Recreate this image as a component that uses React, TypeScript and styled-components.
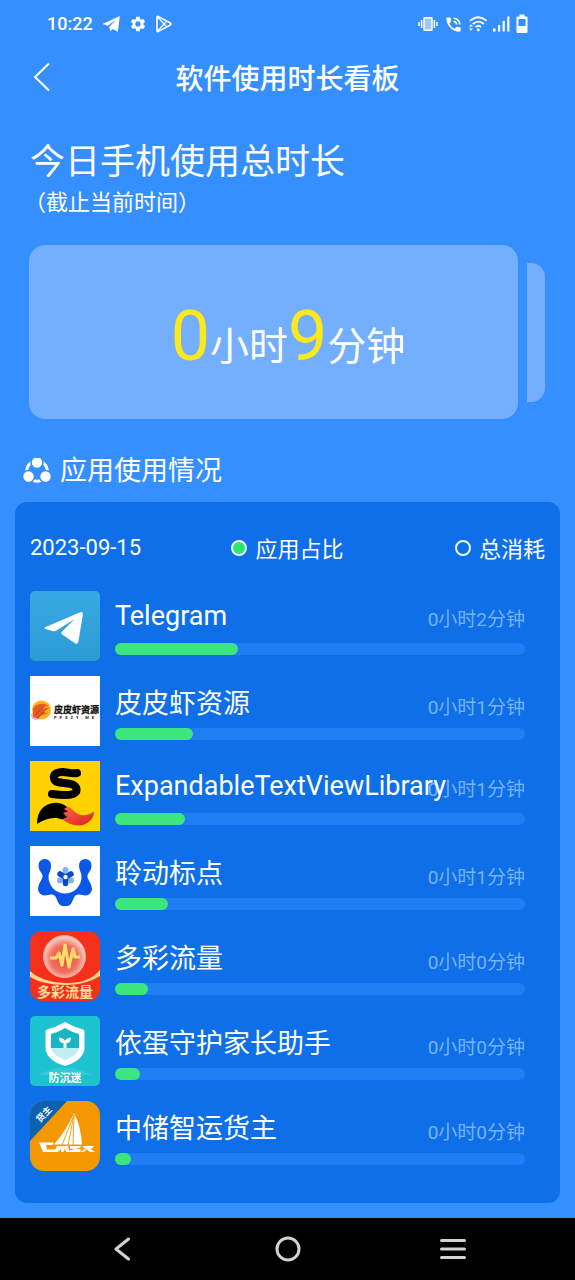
import React, { useState } from 'react';
import styled, { createGlobalStyle } from 'styled-components';
import { MdSettings, MdPhoneInTalk } from 'react-icons/md';

const GlobalStyle = createGlobalStyle`
  * { box-sizing: border-box; }
  body {
    margin: 0;
    background: #368fff;
    color: #fff;
    font-family: Roboto, "Noto Sans CJK SC", sans-serif;
  }
`;

const Screen = styled.div`
  display: flex;
  flex-direction: column;
  min-height: 100vh;
`;

const StatusBar = styled.div`
  display: flex;
  align-items: center;
  justify-content: space-between;
  height: 48px;
  padding: 0 47px;
`;

const StatusGroup = styled.div<{ $gap: number }>`
  display: flex;
  align-items: center;
  gap: ${(p) => p.$gap}px;
  svg { display: block; }
`;

const Clock = styled.span`
  font-size: 18px;
  font-weight: 500;
  line-height: 24px;
`;

const TitleBar = styled.header`
  display: grid;
  grid-template-columns: 60px 1fr 60px;
  align-items: center;
  height: 60px;
  padding: 0 12px;
`;

const IconButton = styled.button`
  display: flex;
  align-items: center;
  justify-content: center;
  height: 56px;
  padding: 0;
  border: 0;
  background: none;
  color: inherit;
  cursor: pointer;
`;

const PageTitle = styled.h1`
  margin: 0;
  padding-top: 4px;
  font-size: 28px;
  font-weight: 500;
  line-height: 56px;
  text-align: center;
`;

const Main = styled.main`
  flex: 1;
  padding: 31px 15px 15px;
`;

const Headline = styled.h2`
  margin: 0;
  padding-left: 15px;
  font-size: 35px;
  font-weight: 400;
  line-height: 48px;
`;

const Subline = styled.p`
  margin: 0;
  padding-left: 9px;
  font-size: 22px;
  line-height: 32px;
`;

const Total = styled.section`
  display: flex;
  align-items: center;
  gap: 9px;
  padding: 0 15px 0 14px;
  margin-top: 26px;
`;

const TotalCard = styled.p`
  flex: 1;
  height: 174px;
  margin: 0;
  padding: 30px 0 0 29px;
  border-radius: 16px;
  background: #73aeff;
  font-size: 39px;
  line-height: 144px;
  text-align: center;
  white-space: nowrap;
`;

const TotalNumber = styled.span`
  color: #fbe91d;
  font-size: 70px;
  line-height: 1;
`;

const NextCard = styled.div`
  width: 18px;
  height: 139px;
  border-radius: 0 14px 14px 0;
  background: #73aeff;
`;

const SectionTitle = styled.h3`
  display: flex;
  align-items: center;
  gap: 9px;
  margin: 32px 0 10px;
  padding-left: 8px;
  font-size: 27px;
  font-weight: 400;
  line-height: 41px;
`;

const Panel = styled.section`
  padding: 26px 15px 32px;
  border-radius: 12px;
  background: #0e6fe8;
`;

const Filters = styled.div`
  display: grid;
  grid-template-columns: 1fr auto 1fr;
  align-items: center;
  height: 40px;
  margin-bottom: 23px;
  font-size: 22px;
  line-height: 40px;
`;

const Choice = styled.label`
  display: flex;
  align-items: center;
  justify-content: flex-end;
  gap: 8px;
  cursor: pointer;
`;

const ChoiceText = styled.span`
  padding-top: 4px;
  line-height: 36px;
`;

const Radio = styled.input`
  appearance: none;
  width: 16px;
  height: 16px;
  margin: 0;
  border: 2px solid #eafaff;
  border-radius: 50%;
  &:checked { background: #2ee56f; }
`;

const AppList = styled.ul`
  display: flex;
  flex-direction: column;
  gap: 15px;
  margin: 0;
  padding: 0;
  list-style: none;
`;

const AppRow = styled.li`
  display: flex;
  gap: 15px;
  height: 70px;
  padding-right: 20px;
`;

const AppIcon = styled.svg<{ $radius: number }>`
  flex: none;
  width: 70px;
  height: 70px;
  border-radius: ${(p) => p.$radius}px;
`;

const Usage = styled.div`
  flex: 1;
  min-width: 0;
`;

const UsageHead = styled.div<{ $latin: boolean }>`
  display: grid;
  height: 52px;
  white-space: nowrap;
  line-height: ${(p) => (p.$latin ? 50 : 56)}px;
  > * { grid-area: 1 / 1; }
`;

const Duration = styled.span`
  justify-self: end;
  padding-top: 4px;
  color: #76b3f7;
  font-size: 19px;
`;

const AppName = styled.span`
  font-size: 27px;
  z-index: 1;
`;

const Track = styled.div`
  height: 12px;
  border-radius: 6px;
  background: #207ef4;
`;

const Fill = styled.div`
  height: 12px;
  border-radius: 6px;
  background: #3ce67c;
`;

const NavBar = styled.nav`
  display: grid;
  grid-template-columns: 1fr 1fr 1fr;
  align-items: center;
  height: 62px;
  padding: 0 40px;
  background: #000;
  color: #d2d2d2;
`;

const Plane = () => (
  <svg width="18" height="18" viewBox="0 0 17 17" fill="#fff" aria-hidden="true">
    <path d="M0.4 8.6 16.8 1 15 15.8 10.2 13.2 7.8 15.4 6.9 11.2 13.4 4.6 5.3 10.2Z" />
  </svg>
);

const PlayStore = () => (
  <svg width="16" height="18" viewBox="0 0 16 18" fill="none" stroke="#fff" strokeWidth="1.6" strokeLinejoin="round" aria-hidden="true">
    <path d="M1 2.4Q1 .8 2.5 1.6L14.3 8Q15.6 9 14.3 10L2.5 16.4Q1 17.2 1 15.6Z" />
    <path d="M1.6 2 10.8 12M1.6 16 10.8 6" strokeWidth="1.2" />
  </svg>
);

const Vibrate = () => (
  <svg width="20" height="16" viewBox="0 0 20 16" fill="none" stroke="#fff" strokeWidth="1.5" aria-hidden="true">
    <rect x="6" y="1.7" width="8" height="12.6" rx="0.6" fill="#9dc8ff" />
    <path d="M3.6 4V12M16.4 4V12M1 6V10M19 6V10" />
  </svg>
);

const Wifi = () => (
  <svg width="18" height="16" viewBox="0 0 18 16" fill="none" stroke="#fff" strokeWidth="1.8" aria-hidden="true">
    <path d="M1 4.8Q9.4-2.4 17.6 4.8M3.8 8Q9.4 3.2 14.8 8M6.6 11Q9.4 8.8 12 11" />
    <circle cx="9.3" cy="13.8" r="1.5" fill="#fff" stroke="none" />
    <path d="M0 10.6 2 8.2 4 10.6ZM0 12.4 2 14.8 4 12.4Z" fill="#fff" stroke="none" />
  </svg>
);

const Signal = () => (
  <svg width="17" height="16" viewBox="0 0 17 16" fill="#fff" aria-hidden="true">
    <path d="M0 12.5H2.5V15.5H0ZM5 9H7.2V15.5H5ZM9.6 5H11.8V15.5H9.6ZM14.2 .5H16.4V15.5H14.2Z" />
  </svg>
);

const Battery = () => (
  <svg width="12" height="20" viewBox="0 0 12 20" aria-hidden="true">
    <path fill="#fff" fillRule="evenodd" d="M3.5 .5H8.5V2.5H10.5Q11.5 2.5 11.5 3.5V18Q11.5 19 10.5 19H1.5Q.5 19 .5 18V3.5Q.5 2.5 1.5 2.5H3.5ZM2.4 5V12H9.6V5Z" />
  </svg>
);

const ShareRing = () => (
  <svg width="28" height="28" viewBox="0 0 28 28" aria-hidden="true">
    <circle cx="14" cy="13" r="10.2" fill="none" stroke="#fff" strokeWidth="3" />
    <g fill="#fff" stroke="#368fff" strokeWidth="1.6">
      <circle cx="14" cy="4.5" r="6" />
      <circle cx="5.5" cy="18.5" r="6" />
      <circle cx="22.5" cy="18.5" r="6" />
    </g>
  </svg>
);

const TelegramArt = () => (
  <>
    <defs>
      <linearGradient id="tg" x2="0" y2="1">
        <stop stopColor="#38a9e4" />
        <stop offset="1" stopColor="#2b9bd5" />
      </linearGradient>
    </defs>
    <rect width="70" height="70" fill="url(#tg)" />
    <path fill="#fff" d="M15 36.2 50.2 21.2Q53.4 20 52.9 23.4L48.4 50.4Q47.6 54 44.4 51.8L32 43.4Q30.4 42 32 40.4L44.8 28 26.5 39.4Q24.5 40.6 22.4 39.9L15 37.7Q13.4 37 15 36.2Z" />
  </>
);

const ShrimpArt = () => (
  <>
    <rect width="70" height="70" fill="#fff" />
    <circle cx="11.5" cy="34" r="9.5" fill="#ffb414" />
    <path d="M3 32Q8 27 15 28L19 30Q14 30 12 33L20 31 14 36 18 38Q11 38 9 42 5 45 2 41 4 36 3 32Z" fill="#ea5b22" />
    <path d="M5 39 14 31M7 42 14 36" stroke="#b04028" strokeWidth="1" />
    <path d="M2 38Q1 43 7 43" fill="none" stroke="#e9b7c6" strokeWidth="2" />
    <text x="24" y="37" fontSize="9" fontWeight="700" fill="#111" stroke="#111" strokeWidth="0.3" fontFamily="Noto Sans CJK SC, sans-serif">皮皮虾资源</text>
    <text x="24" y="43" fontSize="4" fontWeight="700" letterSpacing="3" fill="#111">PPXZY.ME</text>
  </>
);

const FoxArt = () => (
  <>
    <defs>
      <linearGradient id="tail" x2="1" y2="1">
        <stop stopColor="#ff6b4a" />
        <stop offset="1" stopColor="#d91f1a" />
      </linearGradient>
    </defs>
    <rect width="70" height="70" fill="#ffd200" />
    <path d="M47 12C42 13 37 11 33 11C26 11 23 14 24 17.500C25 23 34 21 41 23C48 25 48 31 43 33C37 35 29 34 22 33" fill="none" stroke="#000" strokeWidth="8" strokeLinecap="round" strokeLinejoin="round" />
    <path d="M30 45Q38 44 44 50C50 56 58 55 64 50.500Q64 58 57 62C49 67 40 64 32 58Z" fill="url(#tail)" />
    <path d="M7 63C7 50 14 43 23 42Q31 41 37 46L34 48 38 50.500 33 52 37 56 32 58.500C23 55 15 58 7 63Z" fill="#000" />
  </>
);

const DotsArt = () => (
  <>
    <rect width="70" height="70" fill="#fff" />
    <path fill="#0a57e8" d="M8.500 20C9 26 13 27 12.500 31C12 34 8.500 37 8 43A6.500 6.500 0 0 0 14.500 49.500C18 49 22 47 25 50C27.500 53 28 60 33 60H37C42 60 42.500 53 45 50C48 47 52 49 55.500 49.500A6.500 6.500 0 0 0 62 43C61.500 37 58 34 57.500 31C57 27 61 26 61.500 20A6.300 6.300 0 1 0 49 20C49.500 25 51.500 27 51.500 31A16.500 16.500 0 0 1 18.500 31C18.500 27 21 25 21 20A6.300 6.300 0 1 0 8.500 20Z" />
    <g fill="#7fb2f8">
      <circle cx="35.500" cy="24" r="3" />
      <circle cx="30" cy="34.500" r="3" />
      <circle cx="41" cy="34.500" r="3" />
    </g>
    <path d="M35.500 31V37.500M35.500 31 30 28M35.500 31 41 28" stroke="#0d4bc4" strokeWidth="5.500" strokeLinecap="round" />
    <circle cx="35.500" cy="31" r="2.200" fill="#fff" />
  </>
);

const TrafficArt = () => (
  <>
    <defs>
      <radialGradient id="ball" cx=".5" cy=".55">
        <stop stopColor="#ec4a35" />
        <stop offset=".65" stopColor="#f0705f" />
        <stop offset="1" stopColor="#ffc9bd" />
      </radialGradient>
    </defs>
    <rect width="70" height="70" fill="#f5301a" />
    <path d="M0 40Q12 51 35 52T70 39V45Q56 54 35 54T0 46Z" fill="#ffd08e" />
    <circle cx="34.500" cy="25.500" r="21" fill="url(#ball)" stroke="#f9aba0" strokeWidth="1" />
    <path d="M20 27H26L29 22 32 34 35 14 39 36 43 18 45 26H50" fill="none" stroke="#ffdc6b" strokeWidth="3.200" strokeLinejoin="round" />
    <text x="35" y="66" textAnchor="middle" fontSize="14" fontWeight="700" fill="#ffdc9c" fontFamily="Noto Sans CJK SC, sans-serif">多彩流量</text>
  </>
);

const GuardArt = () => (
  <>
    <rect width="70" height="70" fill="#1cc2cf" />
    <path d="M8 59Q35 44 62 59Z" fill="#31c9d4" />
    <path d="M35 6Q36 6 38 7.500 44 11 52 13 54.500 13.500 54.500 16V32Q54 44 35 50 16 44 15.500 32V16Q15.500 13.500 18 13 26 11 32 7.500 34 6 35 6Z" fill="#fff" />
    <path d="M35 12Q41 16 49 18V32H21V18Q29 16 35 12Z" fill="#18b5c3" />
    <path d="M21 32H49Q48 39 35 44 22 39 21 32Z" fill="#bfeff2" />
    <path d="M33.500 32V27Q29 27 29 21.500 34 22 35 25 36 22 41 21.500 41 27 36.500 27V32Z" fill="#fff" />
    <text x="35" y="65.500" textAnchor="middle" fontSize="11" fontWeight="700" fill="#fff" fontFamily="Noto Sans CJK SC, sans-serif">防沉迷</text>
  </>
);

const SailArt = () => (
  <>
    <rect width="70" height="70" fill="#f39800" />
    <path d="M0 0H37L0 40Z" fill="#0c62ae" />
    <text transform="translate(10 22) rotate(-47)" fontSize="9" fontWeight="700" fill="#fff" fontFamily="Noto Sans CJK SC, sans-serif">货主</text>
    <path d="M44 12Q51 25 52 43.500H24Q36 30 44 12Z" fill="#fff" />
    <path d="M44 14 32 44M44 14 38 44M44 14 43 44" stroke="#f39800" strokeWidth="0.900" />
    <g fill="#fff">
      <path d="M9 41.500H24L22.500 44H16L17 48.500H26L24.500 51H13Z" />
      <path d="M27 45H38L39.500 51H36L35 47.500 33.500 51H31L31 47.500 28 51H24Z" />
      <path d="M40 45H51L50 47H45L51 48.500 50 51H39L40 49H45L40 47.500Z" />
      <path d="M52 45H64L62 47.500H60L65 51H60L57 48.500 54 51H50L55 47.500Z" />
    </g>
  </>
);

interface AppUsage {
  name: string;
  time: string;
  share: number;
  radius: number;
  latin: boolean;
  Art: () => React.ReactElement;
}

const apps: AppUsage[] = [
  { name: 'Telegram', time: '0小时2分钟', share: 30, radius: 5, latin: true, Art: TelegramArt },
  { name: '皮皮虾资源', time: '0小时1分钟', share: 19, radius: 0, latin: false, Art: ShrimpArt },
  { name: 'ExpandableTextViewLibrary', time: '0小时1分钟', share: 17, radius: 0, latin: true, Art: FoxArt },
  { name: '聆动标点', time: '0小时1分钟', share: 13, radius: 0, latin: false, Art: DotsArt },
  { name: '多彩流量', time: '0小时0分钟', share: 8, radius: 12, latin: false, Art: TrafficArt },
  { name: '依蛋守护家长助手', time: '0小时0分钟', share: 6, radius: 5, latin: false, Art: GuardArt },
  { name: '中储智运货主', time: '0小时0分钟', share: 4, radius: 14, latin: false, Art: SailArt },
];

export default function App() {
  const [mode, setMode] = useState('share');

  return (
    <Screen>
      <GlobalStyle />
      <StatusBar>
        <StatusGroup $gap={9}>
          <Clock>10:22</Clock>
          <Plane />
          <MdSettings size={18} />
          <PlayStore />
        </StatusGroup>
        <StatusGroup $gap={6}>
          <Vibrate />
          <MdPhoneInTalk size={19} />
          <Wifi />
          <Signal />
          <Battery />
        </StatusGroup>
      </StatusBar>

      <TitleBar>
        <IconButton aria-label="返回">
          <svg width="18" height="30" viewBox="0 0 18 30" fill="none" stroke="#fff" strokeWidth="2">
            <path d="M16 0.500 2 14 16 27.500" />
          </svg>
        </IconButton>
        <PageTitle>软件使用时长看板</PageTitle>
      </TitleBar>

      <Main>
        <Headline>今日手机使用总时长</Headline>
        <Subline>（截止当前时间）</Subline>

        <Total>
          <TotalCard>
            <TotalNumber>0</TotalNumber>小时<TotalNumber>9</TotalNumber>分钟
          </TotalCard>
          <NextCard />
        </Total>

        <SectionTitle>
          <ShareRing />
          应用使用情况
        </SectionTitle>

        <Panel>
          <Filters>
            <time>2023-09-15</time>
            <Choice>
              <Radio type="radio" name="mode" checked={mode === 'share'} onChange={() => setMode('share')} />
              <ChoiceText>应用占比</ChoiceText>
            </Choice>
            <Choice>
              <Radio type="radio" name="mode" checked={mode === 'total'} onChange={() => setMode('total')} />
              <ChoiceText>总消耗</ChoiceText>
            </Choice>
          </Filters>

          <AppList>
            {apps.map(({ name, time, share, radius, latin, Art }) => (
              <AppRow key={name}>
                <AppIcon viewBox="0 0 70 70" $radius={radius} aria-hidden="true">
                  <Art />
                </AppIcon>
                <Usage>
                  <UsageHead $latin={latin}>
                    <AppName>{name}</AppName>
                    <Duration>{time}</Duration>
                  </UsageHead>
                  <Track role="progressbar" aria-label={name} aria-valuenow={share}>
                    <Fill style={{ width: `${share}%` }} />
                  </Track>
                </Usage>
              </AppRow>
            ))}
          </AppList>
        </Panel>
      </Main>

      <NavBar>
        <IconButton aria-label="后退">
          <svg width="18" height="24" viewBox="0 0 18 24" fill="none" stroke="currentColor" strokeWidth="3" strokeLinecap="round" strokeLinejoin="round">
            <path d="M14.500 2 2 12 14.500 22" />
          </svg>
        </IconButton>
        <IconButton aria-label="主屏幕">
          <svg width="26" height="26" viewBox="0 0 26 26" fill="none" stroke="currentColor" strokeWidth="3">
            <circle cx="13" cy="13" r="11" />
          </svg>
        </IconButton>
        <IconButton aria-label="最近任务">
          <svg width="26" height="22" viewBox="0 0 26 22" stroke="currentColor" strokeWidth="3" strokeLinecap="round">
            <path d="M1.500 2.500H24.500M1.500 11H24.500M1.500 19.500H24.500" />
          </svg>
        </IconButton>
      </NavBar>
    </Screen>
  );
}
